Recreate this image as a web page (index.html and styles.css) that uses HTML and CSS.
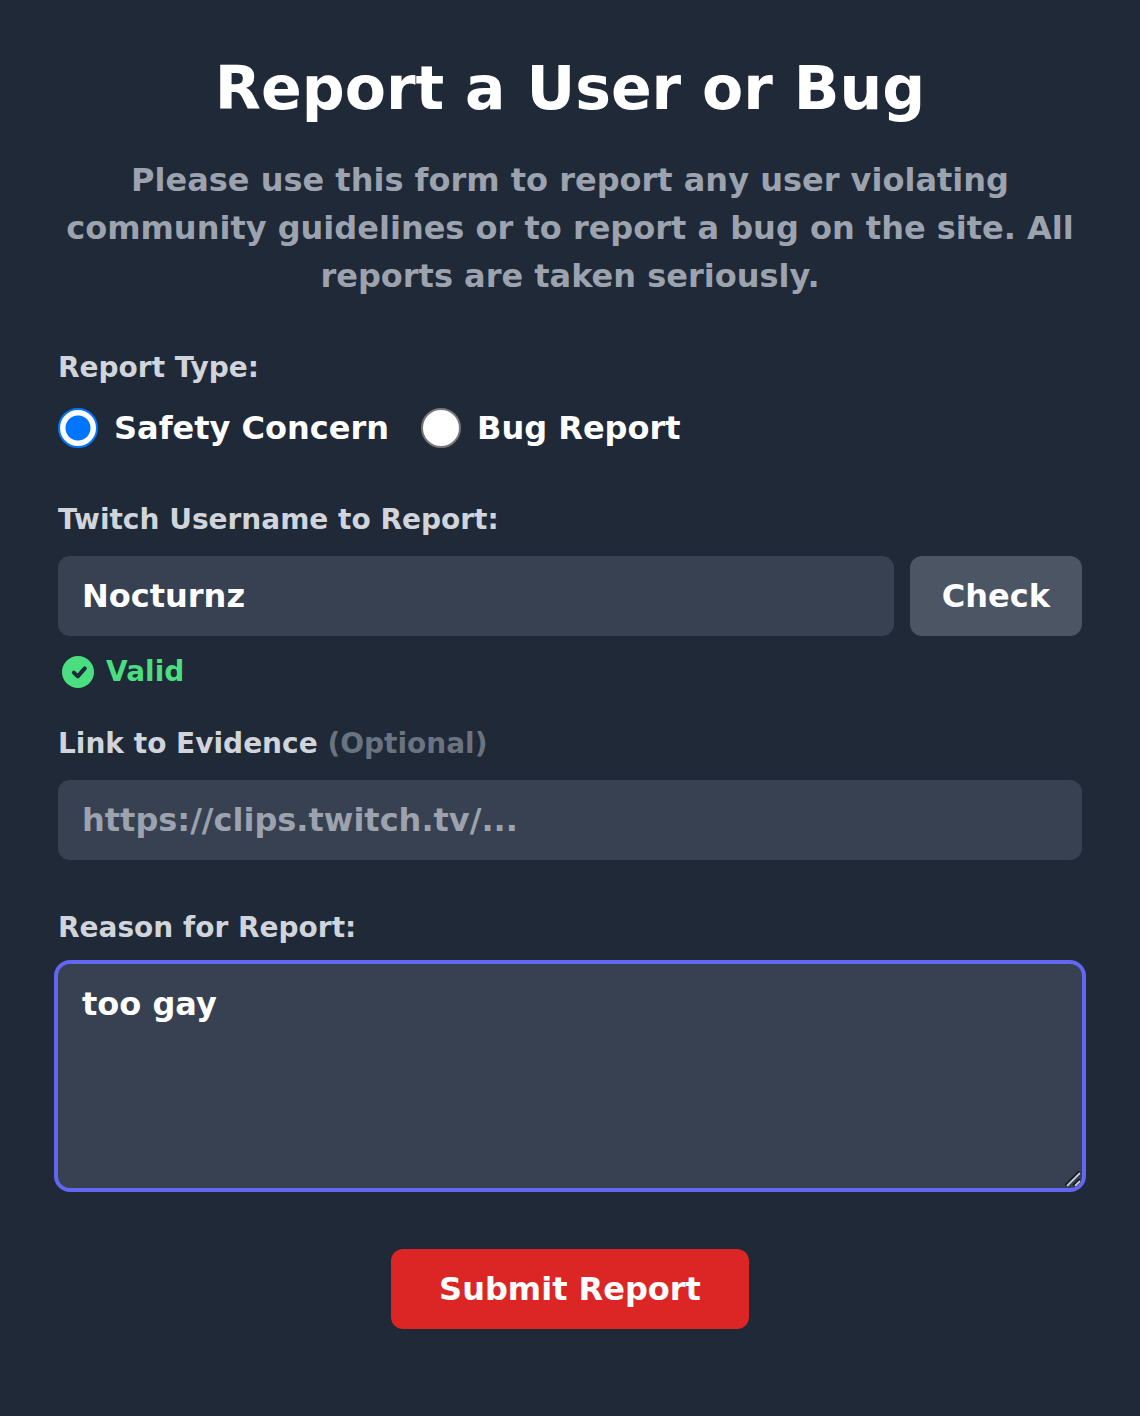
FILE: index.html
```
<!DOCTYPE html>
<html lang="en">
<head>
    <meta charset="UTF-8">
    <meta name="viewport" content="width=device-width, initial-scale=1.0">
    <title>Report a User or Bug</title>
    <link rel="stylesheet" href="styles.css">
</head>
<body>
    <main class="container">
        <h1>Report a User or Bug</h1>
        <p class="intro">Please use this form to report any user violating community guidelines or to report a bug on the site. All reports are taken seriously.</p>

        <form id="reportForm">
            <!-- Report type -->
            <fieldset class="field">
                <legend class="label">Report Type:</legend>
                <div class="radio-row">
                    <label class="radio-option" for="typeSafety">
                        <input type="radio" id="typeSafety" name="reportType" value="safety" checked>
                        Safety Concern
                    </label>
                    <label class="radio-option" for="typeBug">
                        <input type="radio" id="typeBug" name="reportType" value="bug">
                        Bug Report
                    </label>
                </div>
            </fieldset>

            <!-- Username -->
            <div class="field username-field">
                <label class="label" for="username">Twitch Username to Report:</label>
                <div class="username-row">
                    <input type="text" class="input" id="username" name="username" value="Nocturnz" spellcheck="false">
                    <button type="button" class="btn check-btn">Check</button>
                </div>
                <div class="status">
                    <svg class="status-icon" viewBox="0 0 32 32" aria-hidden="true">
                        <circle cx="16" cy="16" r="16" fill="#4ade80"/>
                        <path d="M11.8 16.6l4 3.8 7-8" fill="none" stroke="#1f2937" stroke-width="4" stroke-linecap="round" stroke-linejoin="round"/>
                    </svg>
                    <span>Valid</span>
                </div>
            </div>

            <!-- Evidence -->
            <div class="field">
                <label class="label" for="evidence">Link to Evidence <span class="optional">(Optional)</span></label>
                <input type="text" class="input" id="evidence" name="evidence" placeholder="https://clips.twitch.tv/...">
            </div>

            <!-- Reason -->
            <div class="field reason-field">
                <label class="label" for="reason">Reason for Report:</label>
                <div class="textarea-wrap">
                    <textarea class="input active" id="reason" name="reason" spellcheck="false">too gay</textarea>
                    <svg class="grip" viewBox="0 0 16 16" aria-hidden="true">
                        <path d="M1 15L15 1M9 15l6-6" stroke="#111827" stroke-width="4"/>
                        <path d="M2 15L15 2M10 15l5-5" stroke="#c4c7cc" stroke-width="2"/>
                    </svg>
                </div>
            </div>

            <button type="submit" class="btn submit-btn">Submit Report</button>
        </form>
    </main>
</body>
</html>
```
FILE: styles.css
```
* {
    box-sizing: border-box;
}

body {
    font-family: "DejaVu Sans", Verdana, sans-serif;
    font-size: 32px;
    font-weight: bold;
    line-height: 48px;
    background-color: #1f2937;
    color: #fff;
    margin: 0;
}

.container {
    padding: 52px 58px;
}

h1 {
    font-size: 60px;
    line-height: 72px;
    text-align: center;
    margin: 0 0 32px;
}

.intro {
    color: #9ca3af;
    text-align: center;
    margin: 0 0 48px;
}

.field {
    border: none;
    padding: 0;
    margin: 0 0 48px;
    min-width: 0;
}

.label {
    display: block;
    font-size: 28px;
    line-height: 40px;
    color: #d1d5db;
    padding: 0;
    margin-bottom: 16px;
}

.optional {
    color: #6b7280;
}

.radio-row {
    display: flex;
    gap: 32px;
}

.radio-option {
    display: flex;
    align-items: center;
    gap: 16px;
}

input[type="radio"] {
    appearance: none;
    width: 40px;
    height: 40px;
    margin: 0;
    border: 2px solid #767676;
    border-radius: 50%;
    background-color: #fff;
}

input[type="radio"]:checked {
    border-color: #0075ff;
    background-image: radial-gradient(circle, #0075ff 12px, #fff 13px);
}

.input {
    display: block;
    width: 100%;
    height: 80px;
    padding: 16px 24px;
    border: none;
    border-radius: 12px;
    background-color: #374151;
    color: #fff;
    font: inherit;
    outline: none;
}

.input::placeholder {
    color: #9ca3af;
    opacity: 1;
}

.input:focus,
.input.active {
    box-shadow: 0 0 0 4px #6366f1;
}

textarea.input {
    height: 224px;
    resize: vertical;
}

textarea.input::-webkit-resizer {
    background: transparent;
}

.textarea-wrap {
    position: relative;
}

/* drawn over the corner of the textarea */
.grip {
    position: absolute;
    right: 1px;
    bottom: 1px;
    width: 16px;
    height: 16px;
    pointer-events: none;
}

.username-row {
    display: flex;
    gap: 16px;
}

.username-row .input {
    flex: 1;
    min-width: 0;
}

.username-field {
    margin-bottom: 32px;
}

.status {
    display: flex;
    align-items: center;
    gap: 12px;
    margin-top: 16px;
    padding-left: 4px;
    font-size: 28px;
    line-height: 40px;
    color: #4ade80;
}

.status-icon {
    width: 32px;
    height: 32px;
}

.btn {
    height: 80px;
    padding: 16px 32px;
    border: none;
    border-radius: 12px;
    color: #fff;
    font: inherit;
    cursor: pointer;
}

.check-btn {
    background-color: #4b5563;
}

.check-btn:hover {
    background-color: #6b7280;
}

.reason-field {
    margin-bottom: 61px;
}

.submit-btn {
    display: block;
    margin: 0 auto;
    padding: 16px 48px;
    background-color: #dc2626;
}

.submit-btn:hover {
    background-color: #b91c1c;
}
```
